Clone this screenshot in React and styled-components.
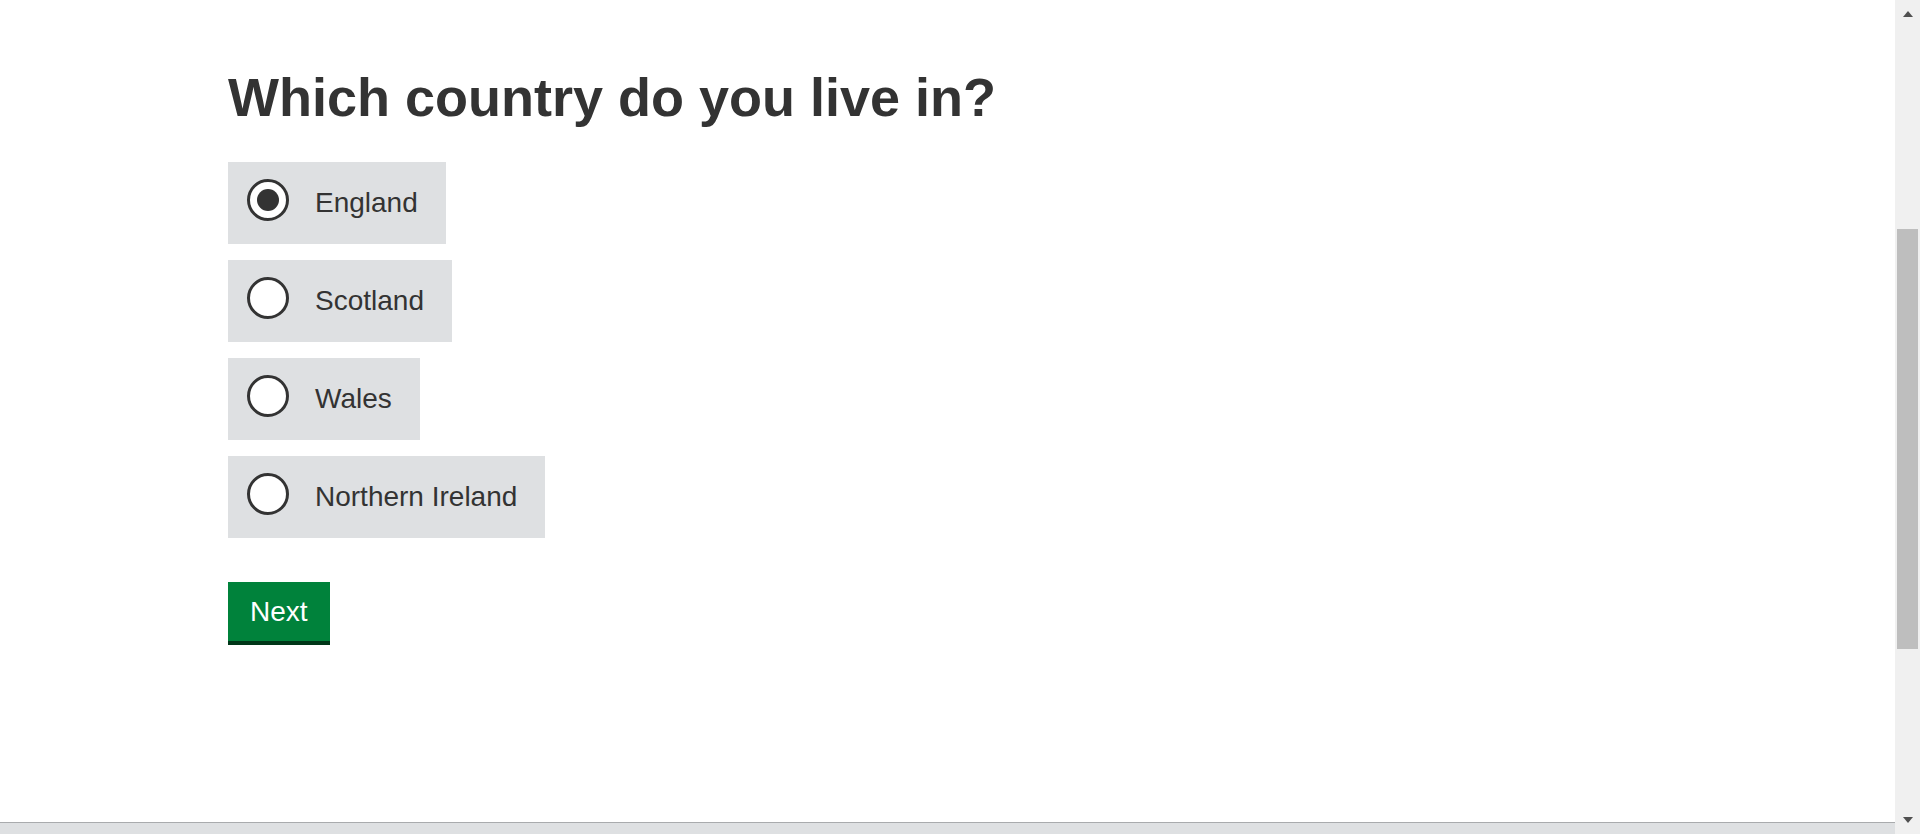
import styled, { createGlobalStyle } from 'styled-components';

const GlobalStyle = createGlobalStyle`
  html, body {
    margin: 0;
    padding: 0;
    background: #ffffff;
    overflow: hidden;
  }
  body {
    font-family: "Liberation Sans", Arial, sans-serif;
    color: #333333;
  }
`;

const Page = styled.div`
  display: flex;
  height: 834px;
  overflow: hidden;
`;

const Main = styled.main`
  flex: 1;
  display: flex;
  flex-direction: column;
  overflow: hidden;
`;

const Content = styled.div`
  flex: none;
  box-sizing: border-box;
  height: 822px;
  padding: 67px 0 0 228px;
`;

const Heading = styled.h1`
  margin: 0 0 35px;
  font-size: 54px;
  line-height: 60px;
  font-weight: 700;
  color: #333333;
`;

const Options = styled.div`
  display: flex;
  flex-direction: column;
  align-items: flex-start;
  gap: 16px;
`;

const Option = styled.label`
  display: flex;
  align-items: center;
  box-sizing: border-box;
  height: 82px;
  padding: 0 28px 0 19px;
  background: #dee0e2;
  cursor: pointer;
`;

const Radio = styled.span`
  position: relative;
  flex: none;
  box-sizing: border-box;
  width: 42px;
  height: 42px;
  margin-bottom: 6px;
  border: 3px solid #333333;
  border-radius: 50%;
  background: #ffffff;

  &::after {
    content: '';
    display: ${(p) => (p.$checked ? 'block' : 'none')};
    position: absolute;
    top: 7px;
    left: 7px;
    width: 22px;
    height: 22px;
    border-radius: 50%;
    background: #333333;
  }
`;

const Label = styled.span`
  margin-left: 26px;
  font-size: 28px;
  line-height: 42px;
  color: #333333;
`;

const Button = styled.button`
  margin-top: 44px;
  height: 59px;
  padding: 0 22px;
  border: 0;
  border-radius: 0;
  background: #00823b;
  box-shadow: 0 4px 0 #003618;
  color: #ffffff;
  font-family: "Liberation Sans", Arial, sans-serif;
  font-size: 28px;
  line-height: 59px;
  cursor: pointer;
`;

const Footer = styled.footer`
  flex: none;
  height: 120px;
  border-top: 1px solid #a9abad;
  background: #dee0e2;
`;

const Scrollbar = styled.div`
  flex: none;
  width: 25px;
  display: flex;
  flex-direction: column;
  background: #f0f0f0;
`;

const Arrow = styled.div`
  flex: none;
  height: 17px;
  display: flex;
  justify-content: center;
  align-items: ${(p) => (p.$down ? 'flex-start' : 'flex-end')};

  &::before {
    content: '';
    width: 0;
    height: 0;
    border-left: 5.5px solid transparent;
    border-right: 5.5px solid transparent;
    ${(p) => (p.$down ? 'border-top: 6px solid #505050;' : 'border-bottom: 6px solid #505050;')}
  }
`;

const Track = styled.div`
  flex: 1;
  padding: 212px 2px 0;
`;

const Thumb = styled.div`
  height: 420px;
  background: #bebebe;
`;

const countries = ['England', 'Scotland', 'Wales', 'Northern Ireland'];

export default function App() {
  return (
    <>
      <GlobalStyle />
      <Page>
        <Main>
          <Content>
            <Heading>Which country do you live in?</Heading>
            <Options>
              {countries.map((c, i) => (
                <Option key={c}>
                  <Radio $checked={i === 0} />
                  <Label>{c}</Label>
                </Option>
              ))}
            </Options>
            <Button type="button">Next</Button>
          </Content>
          <Footer />
        </Main>
        <Scrollbar>
          <Arrow />
          <Track>
            <Thumb />
          </Track>
          <Arrow $down />
        </Scrollbar>
      </Page>
    </>
  );
}
